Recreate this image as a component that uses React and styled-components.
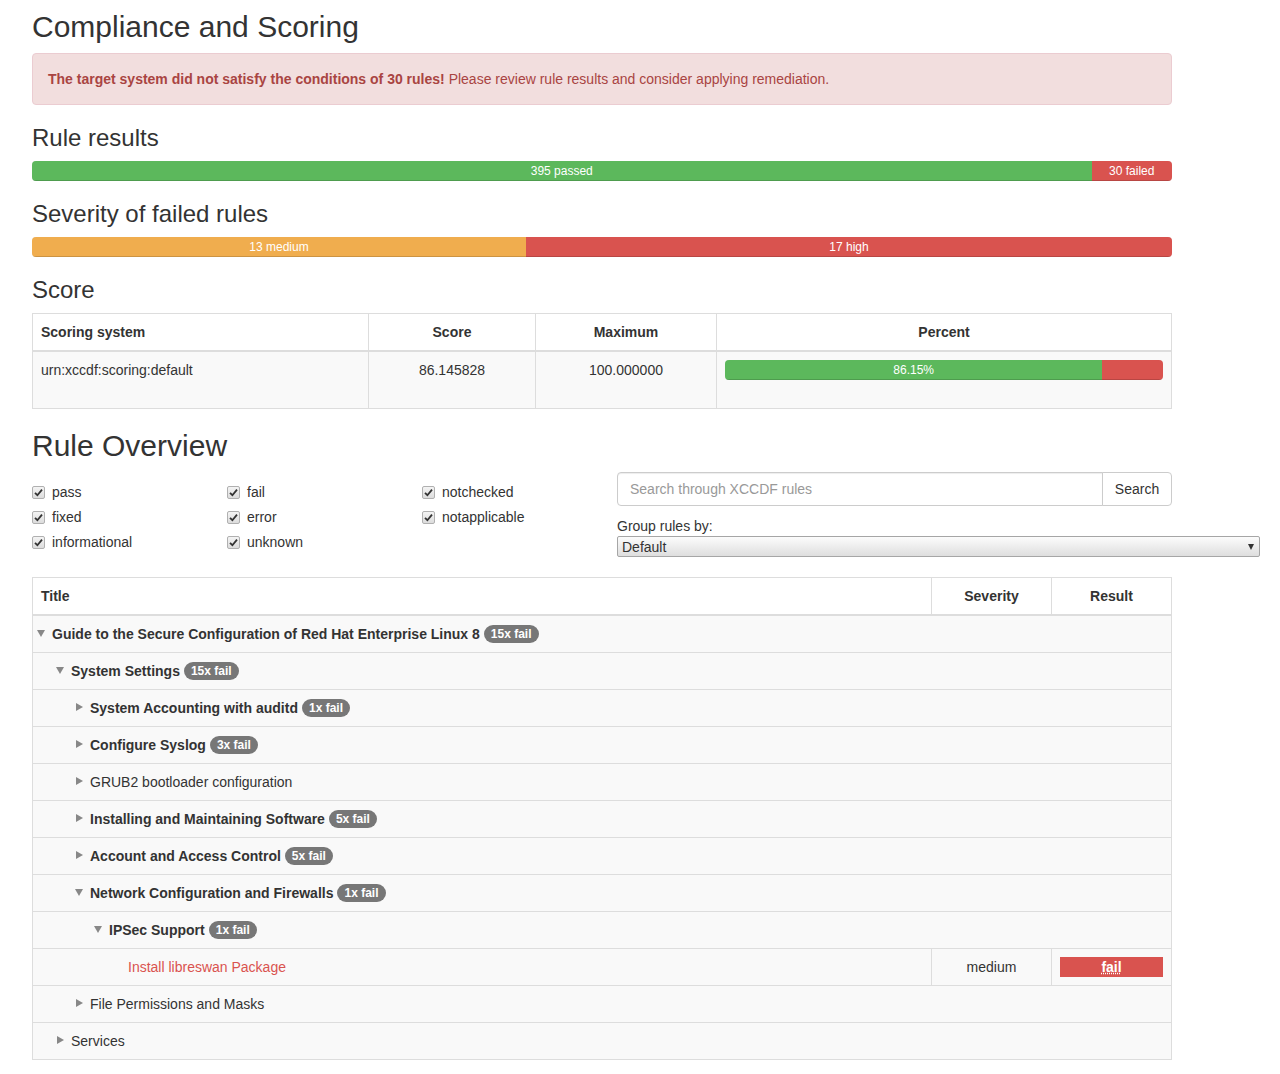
import styled, { createGlobalStyle } from "styled-components";

const GlobalStyle = createGlobalStyle`
  body {
    margin: 0;
    font-family: "Liberation Sans", Arial, sans-serif;
    font-size: 14px;
    line-height: 20px;
    color: #333;
    background: #fff;
  }
`;

const Page = styled.div`
  width: 1140px;
  padding: 10px 0 20px 32px;
`;

const H2 = styled.h2`
  font-size: 30px;
  font-weight: 500;
  line-height: 33px;
  margin: ${(p) => (p.$first ? "0" : "20px")} 0 10px;
`;

const H3 = styled.h3`
  font-size: 24px;
  font-weight: 500;
  line-height: 26px;
  margin: 20px 0 10px;
`;

const Alert = styled.div`
  padding: 15px;
  border: 1px solid #ebccd1;
  border-radius: 4px;
  background: #f2dede;
  color: #a94442;
  margin-bottom: 20px;
`;

const Progress = styled.div`
  display: flex;
  height: 20px;
  overflow: hidden;
  border-radius: 4px;
  background: #f5f5f5;
  box-shadow: inset 0 1px 2px rgba(0, 0, 0, 0.1);
  margin-bottom: 20px;
`;

const Bar = styled.div`
  background: ${(p) => p.$color};
  color: #fff;
  font-size: 12px;
  line-height: 20px;
  text-align: center;
  box-shadow: inset 0 -1px 0 rgba(0, 0, 0, 0.15);
  white-space: nowrap;
`;

const Table = styled.table`
  width: 1139px;
  border-collapse: collapse;
  table-layout: fixed;
  border: 1px solid #ddd;
  margin-bottom: 20px;
`;

const Th = styled.th`
  padding: 8px;
  border: 1px solid #ddd;
  border-bottom-width: 2px;
  font-weight: bold;
  text-align: ${(p) => p.$align || "center"};
  vertical-align: bottom;
  background: #fff;
`;

const Td = styled.td`
  padding: 8px;
  border: 1px solid #ddd;
  text-align: ${(p) => p.$align || "left"};
  vertical-align: top;
  background: #f9f9f9;
`;

const Overview = styled.div`
  display: grid;
  grid-template-columns: 570px 555px;
  column-gap: 15px;
  align-items: start;
  margin-bottom: 20px;
`;

const Filters = styled.div`
  display: grid;
  grid-template-columns: repeat(3, 195px);
  grid-auto-rows: 20px;
  row-gap: 5px;
  padding-top: 10px;
`;

const Check = styled.label`
  display: flex;
  align-items: center;
  gap: 7px;
`;

const Box = styled.span`
  width: 11px;
  height: 11px;
  border: 1px solid #b0b0b0;
  border-radius: 2px;
  background: linear-gradient(#f4f4f4, #dcdcdc);
  display: flex;
  align-items: center;
  justify-content: center;
`;

const SearchPanel = styled.div``;

const InputGroup = styled.div`
  display: flex;
  height: 34px;
`;

const SearchInput = styled.input`
  flex: 1;
  box-sizing: border-box;
  height: 34px;
  padding: 6px 12px;
  font: inherit;
  color: #555;
  border: 1px solid #ccc;
  border-radius: 4px 0 0 4px;
  box-shadow: inset 0 1px 1px rgba(0, 0, 0, 0.075);
  outline: none;
  &::placeholder {
    color: #999;
  }
`;

const SearchButton = styled.button`
  box-sizing: border-box;
  width: 70px;
  height: 34px;
  margin-left: -1px;
  font: inherit;
  color: #333;
  background: #fff;
  border: 1px solid #ccc;
  border-radius: 0 4px 4px 0;
`;

const GroupLabel = styled.div`
  margin-top: 10px;
`;

const SelectWrap = styled.div`
  position: relative;
  width: 643px;
`;

const Select = styled.select`
  appearance: none;
  box-sizing: border-box;
  width: 643px;
  height: 21px;
  padding: 0 4px;
  font: inherit;
  color: #333;
  border: 1px solid #a6a6a6;
  border-radius: 2px;
  background: linear-gradient(#fcfcfc, #dedede);
  display: block;
`;

const SelectArrow = styled.span`
  position: absolute;
  right: 6px;
  top: 8px;
  width: 0;
  height: 0;
  border-left: 3px solid transparent;
  border-right: 3px solid transparent;
  border-top: 6px solid #333;
  pointer-events: none;
`;

const TreeCell = styled.td`
  padding: 8px 8px 8px ${(p) => 4 + p.$level * 19}px;
  border: 1px solid #ddd;
  background: #f9f9f9;
  font-weight: ${(p) => (p.$bold ? "bold" : "normal")};
  color: ${(p) => (p.$rule ? "#d9534f" : "#333")};
  white-space: nowrap;
`;

const Toggle = styled.span`
  display: inline-block;
  width: 15px;
  vertical-align: middle;
  position: relative;
  top: -2px;
  &::before {
    content: "";
    display: block;
    width: 0;
    height: 0;
    ${(p) =>
      p.$open
        ? `border-left: 4.5px solid transparent;
           border-right: 4.5px solid transparent;
           border-top: 7px solid #888;`
        : p.$closed
        ? `margin-left: 1px;
           border-top: 4.5px solid transparent;
           border-bottom: 4.5px solid transparent;
           border-left: 7px solid #888;`
        : ""}
  }
`;

const Badge = styled.span`
  display: inline-block;
  margin-left: 4px;
  padding: 3px 7px;
  font-size: 12px;
  font-weight: bold;
  line-height: 12px;
  color: #fff;
  background: #777;
  border-radius: 10px;
  vertical-align: 1px;
`;

const FailLabel = styled.div`
  background: #d9534f;
  color: #fff;
  font-weight: bold;
  text-align: center;
  line-height: 20px;
  abbr {
    text-decoration: underline dotted;
    cursor: help;
  }
`;

const filters = [
  "pass",
  "fail",
  "notchecked",
  "fixed",
  "error",
  "notapplicable",
  "informational",
  "unknown",
];

const tree = [
  { level: 0, state: "open", title: "Guide to the Secure Configuration of Red Hat Enterprise Linux 8", fails: 15 },
  { level: 1, state: "open", title: "System Settings", fails: 15 },
  { level: 2, state: "closed", title: "System Accounting with auditd", fails: 1 },
  { level: 2, state: "closed", title: "Configure Syslog", fails: 3 },
  { level: 2, state: "closed", title: "GRUB2 bootloader configuration" },
  { level: 2, state: "closed", title: "Installing and Maintaining Software", fails: 5 },
  { level: 2, state: "closed", title: "Account and Access Control", fails: 5 },
  { level: 2, state: "open", title: "Network Configuration and Firewalls", fails: 1 },
  { level: 3, state: "open", title: "IPSec Support", fails: 1 },
  { level: 4, rule: true, title: "Install libreswan Package", severity: "medium", result: "fail" },
  { level: 2, state: "closed", title: "File Permissions and Masks" },
  { level: 1, state: "closed", title: "Services" },
];

function CheckIcon() {
  return (
    <svg width="9" height="9" viewBox="0 0 9 9">
      <path d="M1 4.8 L3.4 7.2 L8 1.6" fill="none" stroke="#333" strokeWidth="1.8" />
    </svg>
  );
}

export default function App() {
  return (
    <>
      <GlobalStyle />
      <Page>
        <H2 $first>Compliance and Scoring</H2>
        <Alert>
          <strong>The target system did not satisfy the conditions of 30 rules!</strong> Please
          review rule results and consider applying remediation.
        </Alert>

        <H3>Rule results</H3>
        <Progress>
          <Bar $color="#5cb85c" style={{ width: `${(395 / 425) * 100}%` }}>395 passed</Bar>
          <Bar $color="#d9534f" style={{ width: `${(30 / 425) * 100}%` }}>30 failed</Bar>
        </Progress>

        <H3>Severity of failed rules</H3>
        <Progress>
          <Bar $color="#f0ad4e" style={{ width: `${(13 / 30) * 100}%` }}>13 medium</Bar>
          <Bar $color="#d9534f" style={{ width: `${(17 / 30) * 100}%` }}>17 high</Bar>
        </Progress>

        <H3>Score</H3>
        <Table>
          <colgroup>
            <col style={{ width: 336 }} />
            <col style={{ width: 167 }} />
            <col style={{ width: 181 }} />
            <col style={{ width: 455 }} />
          </colgroup>
          <thead>
            <tr>
              <Th $align="left">Scoring system</Th>
              <Th>Score</Th>
              <Th>Maximum</Th>
              <Th>Percent</Th>
            </tr>
          </thead>
          <tbody>
            <tr>
              <Td>urn:xccdf:scoring:default</Td>
              <Td $align="center">86.145828</Td>
              <Td $align="center">100.000000</Td>
              <Td>
                <Progress>
                  <Bar $color="#5cb85c" style={{ width: "86.15%" }}>86.15%</Bar>
                  <Bar $color="#d9534f" style={{ width: "13.85%" }} />
                </Progress>
              </Td>
            </tr>
          </tbody>
        </Table>

        <H2>Rule Overview</H2>
        <Overview>
          <Filters>
            {filters.map((f) => (
              <Check key={f}>
                <Box>
                  <CheckIcon />
                </Box>
                {f}
              </Check>
            ))}
          </Filters>
          <SearchPanel>
            <InputGroup>
              <SearchInput placeholder="Search through XCCDF rules" />
              <SearchButton>Search</SearchButton>
            </InputGroup>
            <GroupLabel>Group rules by:</GroupLabel>
            <SelectWrap>
              <Select defaultValue="default">
                <option value="default">Default</option>
              </Select>
              <SelectArrow />
            </SelectWrap>
          </SearchPanel>
        </Overview>

        <Table>
          <colgroup>
            <col style={{ width: 899 }} />
            <col style={{ width: 120 }} />
            <col style={{ width: 120 }} />
          </colgroup>
          <thead>
            <tr>
              <Th $align="left">Title</Th>
              <Th>Severity</Th>
              <Th>Result</Th>
            </tr>
          </thead>
          <tbody>
            {tree.map((row) =>
              row.rule ? (
                <tr key={row.title}>
                  <TreeCell $level={row.level} $rule>
                    <Toggle />
                    {row.title}
                  </TreeCell>
                  <Td $align="center">{row.severity}</Td>
                  <Td $align="center">
                    <FailLabel>
                      <abbr title="The target system or system component did not satisfy all the conditions of the rule.">
                        {row.result}
                      </abbr>
                    </FailLabel>
                  </Td>
                </tr>
              ) : (
                <tr key={row.title}>
                  <TreeCell colSpan={3} $level={row.level} $bold={!!row.fails}>
                    <Toggle $open={row.state === "open"} $closed={row.state === "closed"} />
                    {row.title}
                    {row.fails && <Badge>{row.fails}x fail</Badge>}
                  </TreeCell>
                </tr>
              )
            )}
          </tbody>
        </Table>
      </Page>
    </>
  );
}
